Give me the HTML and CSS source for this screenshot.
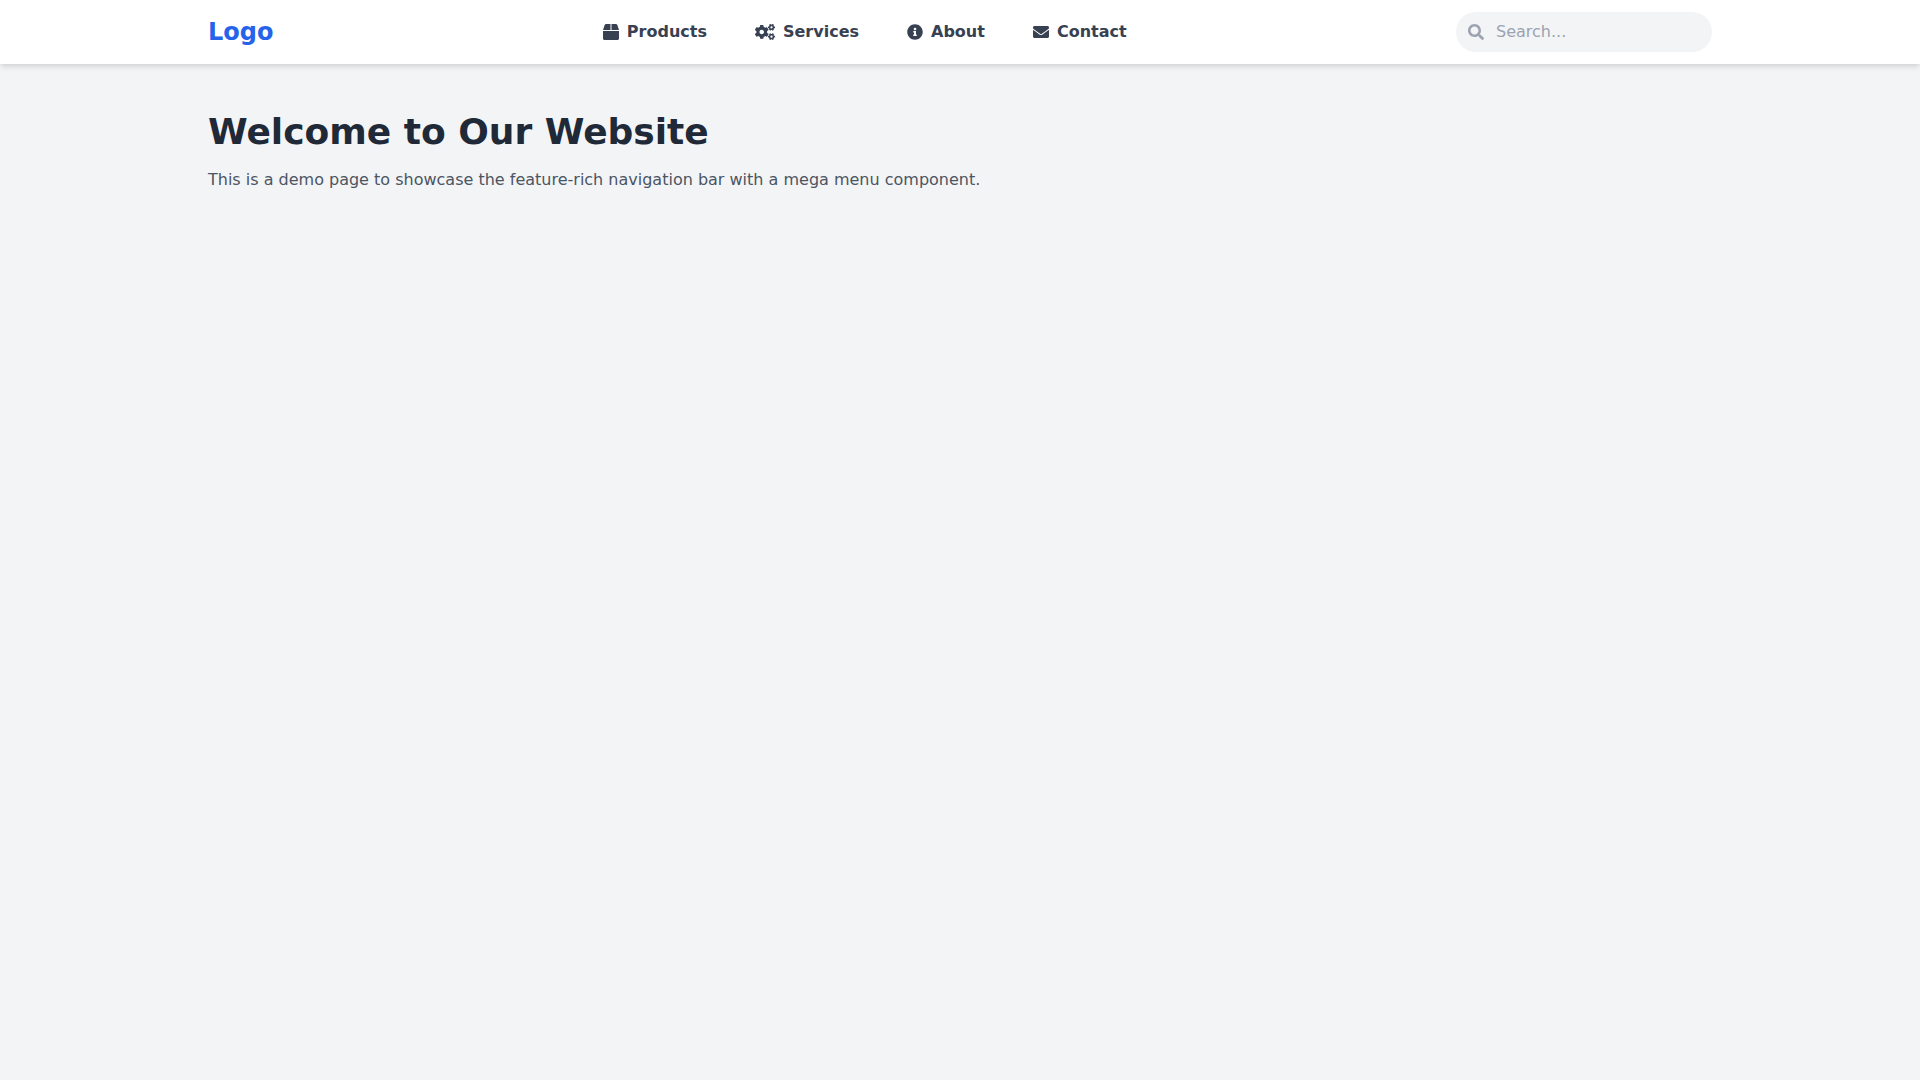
FILE: index.html
```html
<!DOCTYPE html>
<html lang="en">
<head>
    <meta charset="UTF-8">
    <meta name="viewport" content="width=device-width, initial-scale=1.0">
    <title>Mega Menu Navigation</title>
    <link rel="stylesheet" href="styles.css">
</head>
<body>
    <header class="navbar">
        <div class="container navbar-inner">
            <a href="#" class="logo">Logo</a>
            <nav class="menu">
                <a href="#" class="menu-link">
                    <svg class="icon" viewBox="0 0 512 512" aria-hidden="true"><path d="M509.5 184.6L458.9 32.8C452.4 13.2 434.1 0 413.4 0H272v192h238.7c-.4-2.5-.4-5-1.2-7.4zM240 0H98.6c-20.7 0-39 13.2-45.5 32.8L2.5 184.6c-.8 2.4-.8 4.9-1.2 7.4H240V0zM0 224v240c0 26.5 21.5 48 48 48h416c26.5 0 48-21.5 48-48V224H0z"/></svg>
                    <span>Products</span>
                </a>
                <a href="#" class="menu-link">
                    <svg class="icon icon-wide" viewBox="0 0 640 512" aria-hidden="true">
                        <path d="M512.1 191l-8.2 14.3c-3 5.3-9.4 7.5-15.1 5.4-11.8-4.4-22.6-10.7-32.1-18.6-4.6-3.8-5.8-10.5-2.8-15.7l8.2-14.3c-6.9-8-12.3-17.3-15.9-27.4h-16.5c-6 0-11.2-4.3-12.2-10.3-2-12-2.1-24.6 0-37.1 1-6 6.2-10.4 12.2-10.4h16.5c3.6-10.1 9-19.4 15.9-27.4l-8.2-14.3c-3-5.2-1.9-11.9 2.8-15.7 9.5-7.9 20.4-14.2 32.1-18.6 5.7-2.1 12.1.1 15.1 5.4l8.2 14.3c10.5-1.9 21.2-1.9 31.7 0L552 6.3c3-5.3 9.4-7.5 15.1-5.4 11.8 4.4 22.6 10.7 32.1 18.6 4.6 3.8 5.8 10.5 2.8 15.7l-8.2 14.3c6.9 8 12.3 17.3 15.9 27.4h16.5c6 0 11.2 4.3 12.2 10.3 2 12 2.1 24.6 0 37.1-1 6-6.2 10.4-12.2 10.4h-16.5c-3.6 10.1-9 19.4-15.9 27.4l8.2 14.3c3 5.2 1.9 11.9-2.8 15.7-9.5 7.9-20.4 14.2-32.1 18.6-5.7 2.1-12.1-.1-15.1-5.4l-8.2-14.3c-10.4 1.9-21.2 1.9-31.7 0zm-10.5-58.8c38.5 29.6 82.4-14.3 52.8-52.8-38.5-29.7-82.4 14.3-52.8 52.8z"/>
                        <path d="M386.3 286.1l33.7 16.8c10.1 5.8 14.5 18.1 10.5 29.1-8.9 24.2-26.4 46.4-42.6 65.8-7.4 8.9-20.2 11.1-30.3 5.3l-29.1-16.8c-16 13.7-34.6 24.6-54.9 31.7v33.6c0 11.6-8.3 21.6-19.7 23.6-24.6 4.2-50.4 4.4-75.9 0-11.5-2-20-11.9-20-23.6V418c-20.3-7.2-38.9-18-54.9-31.7L74 403c-10 5.8-22.9 3.6-30.3-5.3-16.2-19.4-33.3-41.6-42.2-65.7-4-10.9.4-23.2 10.5-29.1l33.3-16.8c-3.9-20.9-3.9-42.4 0-63.4L12 205.8c-10.1-5.8-14.6-18.1-10.5-29 8.9-24.2 26-46.4 42.2-65.8 7.4-8.9 20.2-11.1 30.3-5.3l29.1 16.8c16-13.7 34.6-24.6 54.9-31.7V57.1c0-11.5 8.2-21.5 19.6-23.5 24.6-4.2 50.5-4.4 76-.1 11.5 2 20 11.9 20 23.6v33.6c20.3 7.2 38.9 18 54.9 31.7l29.1-16.8c10-5.8 22.9-3.6 30.3 5.3 16.2 19.4 33.2 41.6 42.1 65.8 4 10.9.1 23.2-10 29.1l-33.7 16.8c3.9 21 3.9 42.5 0 63.5zm-117.6 21.1c59.2-77-28.7-164.9-105.7-105.7-59.2 77 28.7 164.9 105.7 105.7z"/>
                        <path d="M512.1 489.9l-8.2 14.3c-3 5.3-9.4 7.5-15.1 5.4-11.8-4.4-22.6-10.7-32.1-18.6-4.6-3.8-5.8-10.5-2.8-15.7l8.2-14.3c-6.9-8-12.3-17.3-15.9-27.4h-16.5c-6 0-11.2-4.3-12.2-10.3-2-12-2.1-24.6 0-37.1 1-6 6.2-10.4 12.2-10.4h16.5c3.6-10.1 9-19.4 15.9-27.4l-8.2-14.3c-3-5.2-1.9-11.9 2.8-15.7 9.5-7.9 20.4-14.2 32.1-18.6 5.7-2.1 12.1.1 15.1 5.4l8.2 14.3c10.5-1.9 21.2-1.9 31.7 0l8.2-14.3c3-5.3 9.4-7.5 15.1-5.4 11.8 4.4 22.6 10.7 32.1 18.6 4.6 3.8 5.8 10.5 2.8 15.7l-8.2 14.3c6.9 8 12.3 17.3 15.9 27.4h16.5c6 0 11.2 4.3 12.2 10.3 2 12 2.1 24.6 0 37.1-1 6-6.2 10.4-12.2 10.4h-16.5c-3.6 10.1-9 19.4-15.9 27.4l8.2 14.3c3 5.2 1.9 11.9-2.8 15.7-9.5 7.9-20.4 14.2-32.1 18.6-5.7 2.1-12.1-.1-15.1-5.4l-8.2-14.3c-10.4 1.9-21.2 1.9-31.7 0zm-10.5-58.8c38.5 29.6 82.4-14.3 52.8-52.8-38.5-29.7-82.4 14.3-52.8 52.8z"/>
                    </svg>
                    <span>Services</span>
                </a>
                <a href="#" class="menu-link">
                    <svg class="icon" viewBox="0 0 512 512" aria-hidden="true"><path d="M256 8C119.043 8 8 119.083 8 256c0 136.997 111.043 248 248 248s248-111.003 248-248C504 119.083 392.957 8 256 8zm0 110c23.196 0 42 18.804 42 42s-18.804 42-42 42-42-18.804-42-42 18.804-42 42-42zm56 254c0 6.627-5.373 12-12 12h-88c-6.627 0-12-5.373-12-12v-24c0-6.627 5.373-12 12-12h12v-64h-12c-6.627 0-12-5.373-12-12v-24c0-6.627 5.373-12 12-12h64c6.627 0 12 5.373 12 12v100h12c6.627 0 12 5.373 12 12v24z"/></svg>
                    <span>About</span>
                </a>
                <a href="#" class="menu-link">
                    <svg class="icon" viewBox="0 0 512 512" aria-hidden="true"><path d="M502.3 190.8c3.9-3.1 9.7-.2 9.7 4.7V400c0 26.5-21.5 48-48 48H48c-26.5 0-48-21.5-48-48V195.6c0-5 5.7-7.8 9.7-4.7 22.4 17.4 52.1 39.5 154.1 113.6 21.1 15.4 56.7 47.8 92.2 47.6 35.7.3 72-32.8 92.3-47.6 102-74.1 131.6-96.3 154-113.7zM256 320c23.2.4 56.6-29.2 73.4-41.4 132.7-96.3 142.8-104.7 173.4-128.7 5.8-4.5 9.2-11.5 9.2-18.9v-19c0-26.5-21.5-48-48-48H48c-26.5 0-48 21.5-48 48v19c0 7.4 3.4 14.3 9.2 18.9 30.6 23.9 40.7 32.4 173.4 128.7 16.8 12.2 50.2 41.8 73.4 41.4z"/></svg>
                    <span>Contact</span>
                </a>
            </nav>
            <form class="search">
                <svg class="icon search-icon" viewBox="0 0 512 512" aria-hidden="true"><path d="M505 442.7L405.3 343c-4.5-4.5-10.6-7-17-7H372c27.6-35.3 44-79.7 44-128C416 93.1 322.9 0 208 0S0 93.1 0 208s93.1 208 208 208c48.3 0 92.7-16.4 128-44v16.3c0 6.4 2.5 12.5 7 17l99.7 99.7c9.4 9.4 24.6 9.4 33.9 0l28.3-28.3c9.4-9.4 9.4-24.6.1-34zM208 336c-70.7 0-128-57.2-128-128 0-70.7 57.2-128 128-128 70.7 0 128 57.2 128 128 0 70.7-57.2 128-128 128z"/></svg>
                <input type="search" class="search-input" placeholder="Search..." aria-label="Search">
            </form>
        </div>
    </header>
    <main class="container content">
        <h1>Welcome to Our Website</h1>
        <p>This is a demo page to showcase the feature-rich navigation bar with a mega menu component.</p>
    </main>
</body>
</html>
```
FILE: styles.css
```css
/* General Styles */
* {
    box-sizing: border-box;
}
body {
    font-family: "DejaVu Sans", sans-serif;
    font-size: 16px;
    line-height: 24px;
    margin: 0;
    background-color: #f3f4f6;
}
.container {
    width: 100%;
    max-width: 1536px;
    margin: 0 auto;
    padding: 0 16px;
}
/* Navigation */
.navbar {
    background-color: #fff;
    box-shadow: 0 4px 6px -1px rgba(0, 0, 0, 0.1), 0 2px 4px -1px rgba(0, 0, 0, 0.06);
}
.navbar-inner {
    display: flex;
    align-items: center;
    justify-content: space-between;
    padding: 12px 16px;
}
.logo {
    color: #2563eb;
    font-size: 24px;
    font-weight: bold;
    line-height: 32px;
    text-decoration: none;
}
.menu {
    display: flex;
    gap: 48px;
}
.menu-link {
    display: flex;
    align-items: center;
    gap: 8px;
    color: #374151;
    font-weight: bold;
    text-decoration: none;
}
.menu-link:hover {
    color: #2563eb;
}
.icon {
    width: 16px;
    height: 16px;
    fill: currentColor;
}
.icon-wide {
    width: 20px;
}
/* Search */
.search {
    display: flex;
    align-items: center;
    gap: 12px;
    width: 256px;
    padding: 8px 12px;
    border-radius: 20px;
    background-color: #f3f4f6;
}
.search-icon {
    flex-shrink: 0;
    color: #9ca3af;
}
.search-input {
    flex: 1;
    min-width: 0;
    height: 24px;
    padding: 0;
    border: none;
    outline: none;
    background: transparent;
    color: #374151;
    font: inherit;
}
.search-input::placeholder {
    color: #9ca3af;
}
/* Page Content */
.content {
    padding: 48px 16px;
}
.content h1 {
    margin: 0 0 16px;
    color: #1f2937;
    font-size: 36px;
    line-height: 40px;
}
.content p {
    margin: 0;
    color: #4b5563;
}
```
